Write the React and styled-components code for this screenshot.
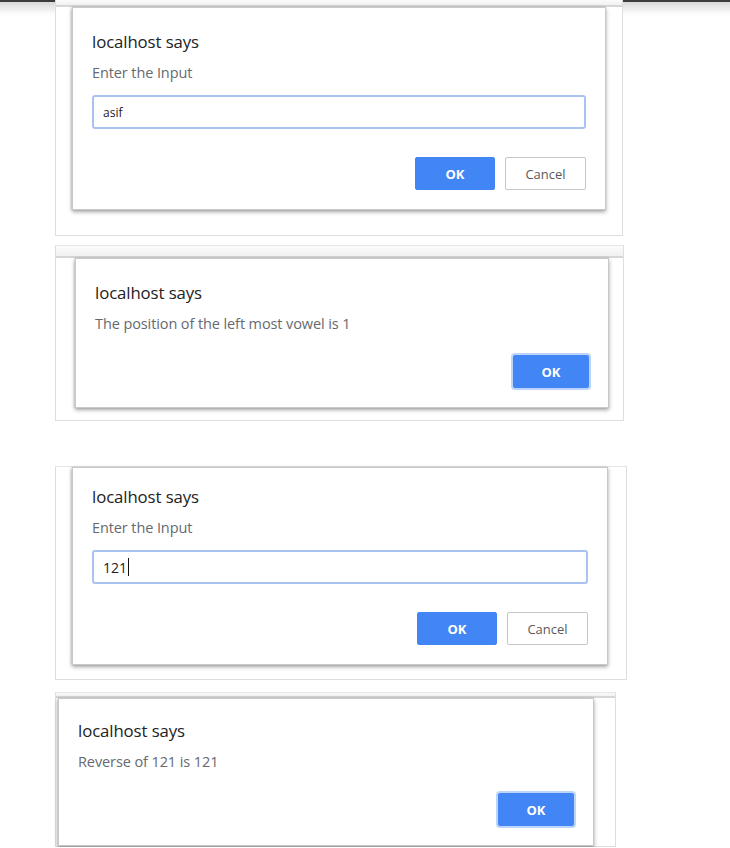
import React from "react";
import styled, { createGlobalStyle } from "styled-components";

const Global = createGlobalStyle`
  html, body { margin: 0; padding: 0; }
  body {
    background: linear-gradient(#3c3c3c 0, #3c3c3c 2px, #d9d9d9 2px, #fafafa 13px, #ffffff 16px) no-repeat;
    background-color: #fff;
    font-family: "Open Sans", "Noto Sans", "Liberation Sans", sans-serif;
    -webkit-font-smoothing: antialiased;
  }
`;

const Page = styled.div`
  display: flex;
  flex-direction: column;
  padding-left: 55px;
  width: 730px;
  box-sizing: border-box;
`;

const Frame = styled.section`
  box-sizing: border-box;
  width: ${(p) => p.$w}px;
  margin-top: ${(p) => p.$mt}px;
  border: 1px solid #dedede;
  border-top: ${(p) => (p.$noTop ? "none" : "1px solid #e6e6e6")};
  display: flex;
  flex-direction: column;
  padding-left: ${(p) => p.$pl}px;
  padding-bottom: ${(p) => p.$pb}px;
  background: #fff;
`;

const Band = styled.div`
  height: ${(p) => p.$h}px;
  margin-left: ${(p) => -p.$pl}px;
  background: linear-gradient(#fbfbfb, #f1f1f1);
  border-bottom: 2px solid #d6d6d6;
  flex: none;
`;

const Dialog = styled.div`
  box-sizing: border-box;
  width: ${(p) => p.$w}px;
  background: #fff;
  border: 1px solid #c9c9c9;
  box-shadow: 0 2px 4px rgba(0, 0, 0, 0.35), -1px 0 2px rgba(0, 0, 0, 0.12);
  padding: ${(p) => p.$pt}px 19px 19px 19px;
  display: flex;
  flex-direction: column;
`;

const Title = styled.div`
  font-size: 16.8px;
  line-height: 20px;
  color: #222;
  letter-spacing: -0.1px;
  white-space: nowrap;
`;

const Message = styled.div`
  margin-top: 12px;
  font-size: 14.5px;
  line-height: 18px;
  color: #666a70;
  letter-spacing: -0.1px;
  white-space: nowrap;
`;

const InputBox = styled.div`
  margin-top: 13px;
  height: 34px;
  box-sizing: border-box;
  border: 2px solid #a9c2ef;
  border-radius: 3px;
  display: flex;
  align-items: center;
  padding-left: 9px;
  font-size: ${(p) => p.$fs}px;
  color: #222;
`;

const Caret = styled.span`
  display: inline-block;
  width: 1px;
  height: 18px;
  background: #111;
  margin-left: 1px;
`;

const Buttons = styled.div`
  margin-top: ${(p) => p.$mt}px;
  display: flex;
  justify-content: flex-end;
  gap: 10px;
`;

const Button = styled.button`
  box-sizing: border-box;
  width: ${(p) => p.$w}px;
  height: 33px;
  border-radius: 2px;
  font-family: "Open Sans", "Noto Sans", sans-serif;
  font-size: 13px;
  cursor: pointer;
  padding: 0;
  ${(p) =>
    p.$primary
      ? `background: #4285f4; color: #fff; font-weight: 700; border: 1px solid #4285f4;`
      : `background: #fff; color: #5a5a5a; font-weight: 400; border: 1px solid #c6c6c6;`}
  ${(p) => (p.$focus ? `box-shadow: 0 0 0 2px rgba(66,133,244,0.35);` : "")}
`;

function PromptDialog({ w, pt, value, fs, caret }) {
  return (
    <Dialog $w={w} $pt={pt}>
      <Title>localhost says</Title>
      <Message>Enter the Input</Message>
      <InputBox $fs={fs}>
        {value}
        {caret && <Caret />}
      </InputBox>
      <Buttons $mt={28}>
        <Button $primary $w={80}>OK</Button>
        <Button $w={81}>Cancel</Button>
      </Buttons>
    </Dialog>
  );
}

function AlertDialog({ w, pt, text }) {
  return (
    <Dialog $w={w} $pt={pt}>
      <Title>localhost says</Title>
      <Message>{text}</Message>
      <Buttons $mt={22}>
        <Button $primary $focus $w={76}>OK</Button>
      </Buttons>
    </Dialog>
  );
}

export default function App() {
  return (
    <>
      <Global />
      <Page>
        <Frame $w={568} $mt={0} $pl={16} $pb={25} $noTop>
          <Band $h={5} $pl={16} />
          <PromptDialog w={534} pt={24} value="asif" fs={12} />
        </Frame>
        <Frame $w={569} $mt={9} $pl={19} $pb={12}>
          <Band $h={10} $pl={19} />
          <AlertDialog w={534} pt={24} text="The position of the left most vowel is 1" />
        </Frame>
        <Frame $w={572} $mt={45} $pl={16} $pb={14}>
          <PromptDialog w={536} pt={19} value="121" fs={14} caret />
        </Frame>
        <Frame $w={561} $mt={12} $pl={2} $pb={0}>
          <Band $h={3} $pl={2} />
          <AlertDialog w={536} pt={22} text="Reverse of 121 is 121" />
        </Frame>
      </Page>
    </>
  );
}
